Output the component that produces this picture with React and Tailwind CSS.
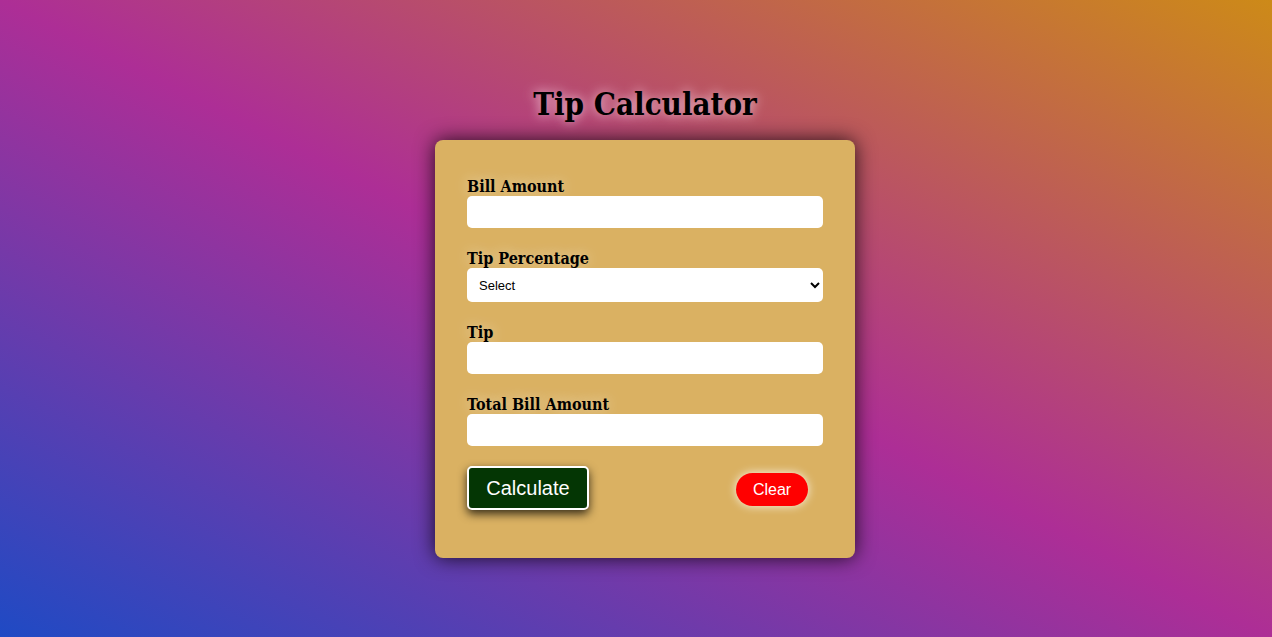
import { useState } from 'react';

const labelCls =
  'block text-[16px] leading-[19px] font-bold text-black [text-shadow:0_0_14px_rgba(255,255,255,0.55)]';

function Field({ label, children }) {
  return (
    <div className="mb-[21px]">
      <label className={labelCls}>{label}</label>
      {children}
    </div>
  );
}

function App() {
  const [bill, setBill] = useState('');
  const [percent, setPercent] = useState('');
  const [tip, setTip] = useState('');
  const [total, setTotal] = useState('');

  const calculate = () => {
    const b = parseFloat(bill);
    const p = parseFloat(percent);
    if (isNaN(b) || isNaN(p)) return;
    const t = (b * p) / 100;
    setTip(t.toFixed(2));
    setTotal((b + t).toFixed(2));
  };

  const clear = () => {
    setBill('');
    setPercent('');
    setTip('');
    setTotal('');
  };

  const inputCls = 'block w-full h-8 bg-white rounded-[5px] px-3 outline-none text-[14px] font-["Liberation_Sans",sans-serif]';

  return (
    <div className="h-screen w-full overflow-hidden bg-[linear-gradient(to_top_right,#1f4ac4_0%,#ad2e96_50%,#cd8a18_100%)] font-['DejaVu_Serif_Condensed','DejaVu_Serif',serif]">
      <div className="flex flex-col items-center pt-[84px] pl-[18px]">
        {/* Title */}
        <h1 className="text-[31px] leading-[40px] font-bold text-black mb-[16px] [text-shadow:0_0_12px_rgba(255,225,235,0.9)]">
          Tip Calculator
        </h1>

        {/* Card */}
        <div className="w-[420px] bg-[#dab162] rounded-[8px] pt-[37px] px-8 pb-[48px] shadow-[0_0_20px_rgba(0,0,0,0.8)]">
          <Field label="Bill Amount">
            <input className={inputCls} value={bill} onChange={(e) => setBill(e.target.value)} />
          </Field>

          <Field label="Tip Percentage">
            <select
              className="block w-full h-[34px] bg-white rounded-[5px] pl-2 pr-1 text-[13px] text-black outline-none font-['Liberation_Sans',sans-serif]"
              value={percent}
              onChange={(e) => setPercent(e.target.value)}
            >
              <option value="">Select</option>
              <option value="5">5%</option>
              <option value="10">10%</option>
              <option value="15">15%</option>
              <option value="20">20%</option>
            </select>
          </Field>

          <Field label="Tip">
            <input className={inputCls} value={tip} readOnly />
          </Field>

          <div>
            <label className={labelCls}>Total Bill Amount</label>
            <input className={inputCls} value={total} readOnly />
          </div>

          {/* Buttons */}
          <div className="flex items-center justify-between mt-5 pr-[15px]">
            <button
              onClick={calculate}
              className="h-[44px] w-[122px] bg-[#043604] border-2 border-white rounded-[5px] text-white text-[20px] font-['Liberation_Sans',sans-serif] shadow-[0_4px_10px_rgba(0,0,0,0.75)]"
            >
              Calculate
            </button>
            <button
              onClick={clear}
              className="h-[33px] w-[72px] bg-[#ff0000] rounded-full text-white text-[16px] font-['Liberation_Sans',sans-serif] mt-[3px] shadow-[0_0_10px_rgba(255,255,255,0.85)]"
            >
              Clear
            </button>
          </div>
        </div>
      </div>
    </div>
  );
}

export default App;
